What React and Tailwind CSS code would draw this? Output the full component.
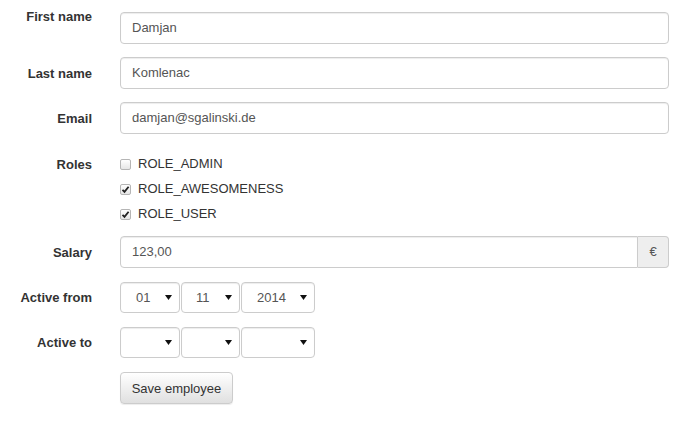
import React from "react";

const Arrow = () => (
  <svg width="7" height="5" viewBox="0 0 7 5" className="shrink-0">
    <path d="M0 0h7L3.5 5z" fill="#111" />
  </svg>
);

function Check({ checked }) {
  return (
    <span className="w-[11px] h-[11px] rounded-[2px] border border-[#b5b5b5] bg-gradient-to-b from-white to-[#e6e6e6] flex items-center justify-center shrink-0">
      {checked && (
        <svg width="9" height="9" viewBox="0 0 9 9">
          <path d="M1.5 4.8l2 2L7.6 1.8" stroke="#222" strokeWidth="1.8" fill="none" />
        </svg>
      )}
    </span>
  );
}

function Select({ value, width, pl }) {
  return (
    <div
      className={`h-[31px] ${width} border border-[#ccc] rounded-[4px] bg-white flex items-center justify-between pr-[7px] ${pl} text-[13px] text-[#555] shadow-[inset_0_1px_1px_rgba(0,0,0,0.075)]`}
    >
      <span>{value}</span>
      <Arrow />
    </div>
  );
}

function Label({ children, cls = "pt-[7px]" }) {
  return (
    <div className={`w-[92px] shrink-0 text-right font-bold text-[13px] leading-[20px] text-[#333] ${cls}`}>
      {children}
    </div>
  );
}

function TextRow({ label, value, mb, labelCls }) {
  return (
    <div className={`flex gap-[28px] ${mb}`}>
      <Label cls={labelCls}>{label}</Label>
      <div className="flex-1 h-[32px] border border-[#ccc] rounded-[4px] bg-white flex items-center pl-[11px] text-[13px] text-[#555] shadow-[inset_0_1px_1px_rgba(0,0,0,0.075)]">
        {value}
      </div>
    </div>
  );
}

export default function App() {
  const roles = [
    ["ROLE_ADMIN", false],
    ["ROLE_AWESOMENESS", true],
    ["ROLE_USER", true],
  ];

  return (
    <div className="w-[680px] h-[425px] bg-white pt-[12px] pr-[11px] font-['Liberation_Sans',Arial,sans-serif]">
      <TextRow label="First name" value="Damjan" mb="mb-[13px]" labelCls="-mt-[5px]" />
      <TextRow label="Last name" value="Komlenac" mb="mb-[13px]" />
      <TextRow label="Email" value="damjan@sgalinski.de" mb="mb-[20px]" />

      {/* roles */}
      <div className="flex gap-[28px] mb-[7px]">
        <Label cls="pt-[1px]">Roles</Label>
        <div className="flex flex-col">
          {roles.map(([name, on]) => (
            <div key={name} className="h-[25px] flex items-start">
              <div className="h-[20px] flex items-center gap-[7px] text-[13px] text-[#333]">
                <Check checked={on} />
                <span>{name}</span>
              </div>
            </div>
          ))}
        </div>
      </div>

      {/* salary */}
      <div className="flex gap-[28px] mb-[14px]">
        <Label>Salary</Label>
        <div className="flex-1 flex h-[32px]">
          <div className="flex-1 border border-[#ccc] rounded-l-[4px] bg-white flex items-center pl-[11px] text-[13px] text-[#555] shadow-[inset_0_1px_1px_rgba(0,0,0,0.075)]">
            123,00
          </div>
          <div className="w-[31px] border border-l-0 border-[#ccc] rounded-r-[4px] bg-[#eee] flex items-center justify-center text-[13px] text-[#555]">
            €
          </div>
        </div>
      </div>

      <div className="flex gap-[28px] mb-[14px]">
        <Label cls="pt-[6px]">Active from</Label>
        <div className="flex gap-[1px]">
          <Select value="01" width="w-[60px]" pl="pl-[15px]" />
          <Select value="11" width="w-[59px]" pl="pl-[14px]" />
          <Select value="2014" width="w-[74px]" pl="pl-[15px]" />
        </div>
      </div>

      <div className="flex gap-[28px] mb-[14px]">
        <Label cls="pt-[6px]">Active to</Label>
        <div className="flex gap-[1px]">
          <Select value="" width="w-[60px]" pl="pl-[15px]" />
          <Select value="" width="w-[59px]" pl="pl-[14px]" />
          <Select value="" width="w-[74px]" pl="pl-[15px]" />
        </div>
      </div>

      <div className="flex gap-[28px]">
        <div className="w-[92px] shrink-0" />
        <button className="h-[32px] w-[113px] border border-[#ccc] rounded-[4px] bg-gradient-to-b from-white to-[#e0e0e0] text-[13px] text-[#333] pt-[1px] shadow-[inset_0_1px_0_rgba(255,255,255,0.15),0_1px_1px_rgba(0,0,0,0.075)]">
          Save employee
        </button>
      </div>
    </div>
  );
}
